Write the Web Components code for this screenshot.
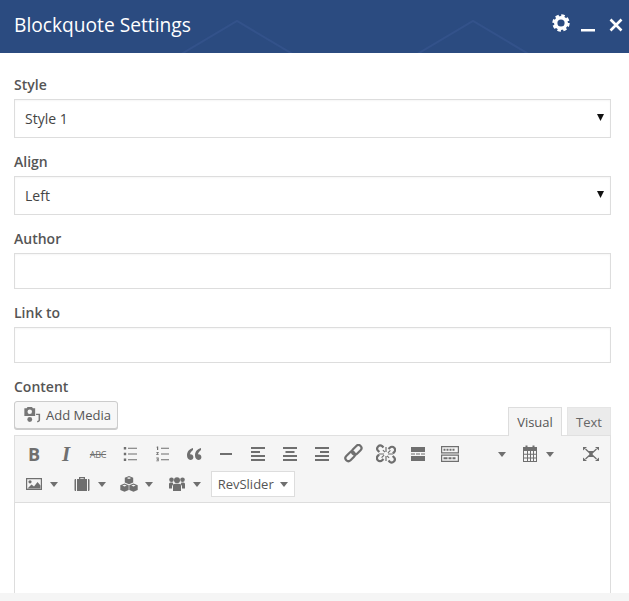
<!DOCTYPE html>
<html lang="en">
<head>
<meta charset="UTF-8">
<title>Blockquote Settings</title>
<style>
  html, body { margin: 0; height: 100%; background: #fff; overflow: hidden; }
  body { font-family: "Open Sans", sans-serif; }
</style>
</head>
<body>

<settings-dialog heading="Blockquote Settings">
  <form-field label="Style"><select-box value="Style 1"></select-box></form-field>
  <form-field label="Align"><select-box value="Left"></select-box></form-field>
  <form-field label="Author"><text-box></text-box></form-field>
  <form-field label="Link to"><text-box></text-box></form-field>
  <form-field label="Content" tight><content-editor></content-editor></form-field>
</settings-dialog>

<script>
  // Toolbar icon shapes, all on a 20x20 grid
  const ICONS = {
    ul: '<path d="M3.800 3h2.400v2.400H3.800zM3.800 8.800h2.400v2.400H3.800zM3.800 14.600h2.400V17H3.800zM8 3.700h9v1H8zM8 9.500h9v1H8zM8 15.300h9v1H8z"/>',
    ol: '<path d="M9 3.700h8v1H9zM9 9.500h8v1H9zM9 15.300h8v1H9z"/><path d="M5 2.500h1.200v3.600H5V3.400h-.7zM4.300 8h2.400v.8L5.400 10.300h1.300v.7H4.300v-.7l1.400-1.600H4.300zM4.300 13.500h2.400V17.200H4.300v-.7h1.500v-.7h-1v-.7h1v-.7H4.300z"/>',
    quote: '<path d="M9 4c-3.500 1-6 3.500-6 7.300 0 2.700 1.300 4.700 3.500 4.700 1.700 0 2.900-1.200 2.900-2.800 0-1.700-1.200-2.900-2.900-2.900-.2 0-.4 0-.6.100.3-1.500 1.600-3.200 3.100-4.300zM17 4c-3.500 1-6 3.500-6 7.300 0 2.700 1.300 4.700 3.500 4.700 1.700 0 2.900-1.200 2.900-2.800 0-1.700-1.200-2.900-2.900-2.900-.2 0-.4 0-.6.100.3-1.500 1.600-3.200 3.100-4.300z"/>',
    hr: '<path d="M4 9h12v2H4z"/>',
    left: '<path d="M3 3h14v2H3zM3 7h9v2H3zM3 11h14v2H3zM3 15h14v2H3z"/>',
    center: '<path d="M3 3h14v2H3zM5.500 7h9v2h-9zM3 11h14v2H3zM3 15h14v2H3z"/>',
    right: '<path d="M3 3h14v2H3zM8 7h9v2H8zM3 11h14v2H3zM3 15h14v2H3z"/>',
    link: '<g fill="none" stroke="currentColor" stroke-width="2.200"><rect x="-1" y="-3" width="11" height="6" rx="3" transform="translate(3 15.500) rotate(-45)"/><rect x="-1" y="-3" width="11" height="6" rx="3" transform="translate(9.500 9) rotate(-45)"/></g>',
    unlink: '<g fill="none" stroke="currentColor" stroke-width="2.200"><path d="M7.500 15l-1.300 1.300a3.100 3.100 0 0 1-4.400-4.400L3.100 10.600M12.500 5l1.300-1.300a3.100 3.100 0 0 1 4.400 4.400l-1.300 1.300"/><path d="M3.300 8L1.900 6.600a3.100 3.100 0 0 1 4.300-4.400L7.500 3.500M16.700 12l1.400 1.400a3.100 3.100 0 0 1-4.300 4.400L12.500 16.500"/></g><path d="M9.400 3h1.200v5H9.400zM9.400 12h1.200v5H9.400zM3 9.400h5v1.200H3zM12 9.400h5v1.200h-5z"/><path d="M11.500 8.500l2.500-2.500.8.800-2.500 2.500zM8.500 11.500L6 14l-.800-.800 2.500-2.500zM8.500 8.500L6.500 6.500l.8-.8 2 2zM11.500 11.500l2 2-.8.800-2-2z"/>',
    more: '<path d="M3 3h14v5H3zM3 12h14v5H3zM3 9.400h4v1.200H3zM8 9.400h4v1.200H8zM13 9.400h4v1.200h-4z"/>',
    kitchen: '<path d="M1 2h18v7.500H1zm1.200 1.200v5.100h15.600V3.200zM1 10.500h18V18H1zm1.200 1.200v5.100h15.600v-5.100z" fill-rule="evenodd"/><path d="M3.500 4.700h2v2h-2zm3 0h2v2h-2zm3 0h2v2h-2zm3 0h2v2h-2zm-9 8.500h4v2h-4zm5 0h3v2h-3zm4 0h3v2h-3z"/>',
    calendar: '<path d="M5.500 1.500h2V4h-2zM12.500 1.500h2V4h-2z"/><path d="M3 3h14v15H3zm1 4v10h12V7z" fill-rule="evenodd"/><path d="M4 9.800h12v1H4zM4 13.400h12v1H4zM7 7h1v10H7zM10 7h1v10h-1zM13 7h1v10h-1z"/>',
    full: '<path d="M2 3h4L2 6.600zM18 3v3.600L14 3zM2 17v-3.600L6 17zM18 17h-4l4-3.600z"/><path d="M4.500 5L8 8.200M15.500 5L12 8.200M4.500 15L8 11.800M15.500 15L12 11.800" stroke="currentColor" stroke-width="1.300"/><path d="M6.800 7h6.400L11.500 10l1.700 3H6.800l1.700-3z"/>',
    image: '<path d="M2 4h16v12H2zm1.200 1.200v9.600h13.600V5.200z" fill-rule="evenodd"/><circle cx="6" cy="7.800" r="1.600"/><path d="M3.500 14.500l4-4 2.500 2 3.500-4.500 3 3.500v3z"/>',
    briefcase: '<path d="M7 3h6v2h2v12H5V5h2zm1.300 1.200V5h3.400v-.8zM2.500 6a1 1 0 0 1 1-1H4v12h-.5a1 1 0 0 1-1-1zM16 5h.5a1 1 0 0 1 1 1v10a1 1 0 0 1-1 1H16z" fill-rule="evenodd"/>',
    cubes: '<path d="M10 2l4.200 1.800v4.700L10 10.300 5.800 8.500V3.800zM7.800 4.100L10 5l2.200-.9L10 3.200zM5.500 9.500l4.200 1.800V16l-4.200 1.800L1.300 16v-4.700zM3.300 11.600l2.200.9 2.200-.9-2.200-.9zM14.500 9.500l4.200 1.800V16l-4.200 1.800-4.200-1.800v-4.700zM12.300 11.600l2.200.9 2.200-.9-2.200-.9z" fill-rule="evenodd"/>',
    users: '<circle cx="10" cy="6.300" r="3"/><circle cx="4.500" cy="5.800" r="2.300"/><circle cx="15.500" cy="5.800" r="2.300"/><path d="M6 11.500a2 2 0 0 1 2-1.700h4a2 2 0 0 1 2 1.700v5.500H6zM2 10a1.500 1.500 0 0 1 1.500-1.500h2.200c.2 1 .6 1.500 1 1.800A2.800 2.800 0 0 0 5 12.500V14.500H2zM18 10a1.500 1.500 0 0 0-1.500-1.500h-2.200c-.2 1-.6 1.500-1 1.800a2.800 2.800 0 0 1 1.700 2.200v2H18z"/>',
    media: '<path d="M1.500 2.500H4l1-1.500h5l1 1.500h2.500V11h-12zM7.500 4a2.500 2.500 0 1 0 0 5 2.500 2.500 0 0 0 0-5z" fill-rule="evenodd"/><path d="M14.500 8.500H19V15.500a2.500 2.500 0 0 1-3.500 2.200l.5-1.400c.8.300 1.300-.1 1.300-.8V10h-2.800z"/><circle cx="7.500" cy="15" r="2.700"/>'
  };

  class ToolIcon extends HTMLElement {
    constructor() {
      super();
      this.attachShadow({ mode: "open" });
      const size = this.getAttribute("size") || 20;
      this.shadowRoot.innerHTML = `
        <style>
          :host { display: inline-flex; color: inherit; }
          svg { display: block; fill: currentColor; }
        </style>
        <svg width="${size}" height="${size}" viewBox="0 0 20 20">${ICONS[this.getAttribute("name")]}</svg>
      `;
    }
  }
  customElements.define("tool-icon", ToolIcon);

  // Icon or glyph button, optional dropdown caret after it
  class ToolButton extends HTMLElement {
    constructor() {
      super();
      this.attachShadow({ mode: "open" });
      this.shadowRoot.innerHTML = `
        <style>
          :host { display: flex; align-items: center; justify-content: center; height: 30px; width: 32px; color: #6f6f6f; }
          :host([caret]) { justify-content: flex-start; box-sizing: border-box; width: 47.67px; padding-left: 6px; gap: 6px; }
          .caret { width: 0; height: 0; border: 4px solid transparent; border-top: 5px solid #6f6f6f; border-bottom: 0; }
          .box { display: flex; align-items: center; justify-content: center; width: 20px; height: 20px; }
        </style>
        <span class="box"><slot></slot></span>
        ${this.hasAttribute("caret") ? '<span class="caret"></span>' : ""}
      `;
    }
  }
  customElements.define("tool-button", ToolButton);

  class SettingsDialog extends HTMLElement {
    constructor() {
      super();
      this.attachShadow({ mode: "open" });
      this.shadowRoot.innerHTML = `
        <style>
          :host { display: flex; flex-direction: column; height: 601px; background: #fff; }
          header { position: relative; flex: none; height: 53px; background: #2b4b80; color: #fff; display: flex; align-items: center; padding: 0 6px 0 14px; overflow: hidden; }
          .pattern { position: absolute; left: 0; top: 0; }
          h1 { position: relative; flex: 1; margin: 0 0 4px; font: 400 19.2px "Open Sans", sans-serif; }
          .actions { position: relative; display: flex; align-items: flex-start; height: 53px; }
          main { flex: 1; min-height: 0; padding: 21px 18px 0 14px; display: flex; flex-direction: column; }
          footer { flex: none; height: 8px; background: #f5f5f5; }
        </style>
        <header>
          <svg class="pattern" width="629" height="53" fill="none" stroke="#33528a" stroke-width="2">
            <path d="M178 56L237 21l59 35M414 56l59-35 59 35"/>
          </svg>
          <h1>${this.getAttribute("heading")}</h1>
          <div class="actions">
            <svg width="18" height="18" viewBox="0 0 18 18" style="margin-top:14px">
              <circle cx="9" cy="9" r="5.300" fill="none" stroke="#fff" stroke-width="3.400"/>
              <circle cx="9" cy="9" r="7.500" fill="none" stroke="#fff" stroke-width="2.400" stroke-dasharray="3.500 2.390"/>
            </svg>
            <svg width="14" height="3" style="margin:29px 0 0 11px"><rect width="14" height="2.500" fill="#fff"/></svg>
            <svg width="14" height="14" viewBox="0 0 14 14" style="margin:18px 0 0 14px"><path d="M1.500 1.500l11 11M12.500 1.500l-11 11" stroke="#fff" stroke-width="2.600"/></svg>
          </div>
        </header>
        <main><slot></slot></main>
        <footer></footer>
      `;
    }
  }
  customElements.define("settings-dialog", SettingsDialog);

  class FormField extends HTMLElement {
    constructor() {
      super();
      this.attachShadow({ mode: "open" });
      this.shadowRoot.innerHTML = `
        <style>
          :host { display: block; margin-bottom: 13px; }
          :host([tight]) { margin-bottom: 0; flex: 1; display: flex; flex-direction: column; min-height: 0; }
          label { display: block; height: 25px; font: 600 14px/22px "Open Sans", sans-serif; color: #555; }
        </style>
        <label>${this.getAttribute("label")}</label>
        <slot></slot>
      `;
    }
  }
  customElements.define("form-field", FormField);

  class SelectBox extends HTMLElement {
    constructor() {
      super();
      this.attachShadow({ mode: "open" });
      this.shadowRoot.innerHTML = `
        <style>
          :host { display: flex; align-items: center; justify-content: space-between; box-sizing: border-box; height: 39px; padding: 0 6px 0 10px; border: 1px solid #ddd; background: #fff; font: 400 14px "Open Sans", sans-serif; color: #444; box-shadow: inset 0 1px 2px rgba(0,0,0,.04); }
          svg { display: block; margin-bottom: 3px; }
        </style>
        <span>${this.getAttribute("value")}</span>
        <svg width="7" height="8"><path d="M0 1h7L3.500 8z" fill="#111"/></svg>
      `;
    }
  }
  customElements.define("select-box", SelectBox);

  class TextBox extends HTMLElement {
    constructor() {
      super();
      this.attachShadow({ mode: "open" });
      this.shadowRoot.innerHTML = `
        <style>
          :host { display: block; box-sizing: border-box; height: 36px; border: 1px solid #ddd; background: #fff; box-shadow: inset 0 1px 2px rgba(0,0,0,.04); }
        </style>
      `;
    }
  }
  customElements.define("text-box", TextBox);

  class ContentEditor extends HTMLElement {
    constructor() {
      super();
      this.attachShadow({ mode: "open" });
      this.shadowRoot.innerHTML = `
        <style>
          :host { display: flex; flex-direction: column; flex: 1; min-height: 0; }
          .top { display: flex; align-items: flex-end; justify-content: space-between; height: 34px; flex: none; }
          .media { display: flex; align-items: center; gap: 5px; box-sizing: border-box; height: 28px; width: 104px; margin-bottom: 6px; padding-left: 8px; border: 1px solid #ccc; border-radius: 3px; background: #f7f7f7; box-shadow: 0 1px 0 #ccc; font: 400 13px "Open Sans", sans-serif; color: #555; }
          .tabs { display: flex; gap: 5px; align-items: flex-end; }
          .tab { box-sizing: border-box; height: 28px; padding: 0 6px; display: flex; align-items: center; justify-content: center; border: 1px solid #e5e5e5; border-bottom: 0; background: #ebebeb; font: 400 13px "Open Sans", sans-serif; color: #666; }
          .tab.visual { width: 54px; height: 29px; margin-bottom: -1px; background: #f5f5f5; border-color: #ddd; color: #555; position: relative; }
          .tab.text { width: 44px; }
          .toolbar { flex: none; height: 68px; box-sizing: border-box; padding: 3px 4px 0 3px; background: #f5f5f5; border: 1px solid #e0e0e0; border-bottom-color: #ddd; }
          .row { display: flex; align-items: center; height: 30px; }
          .push { flex: 1; }
          .bold { font: 700 18px "Open Sans", sans-serif; }
          .ital { font: italic 700 21px "Liberation Serif", serif; }
          .abc { font: 400 9px "Open Sans", sans-serif; text-decoration: line-through; letter-spacing: -.3px; }
          .full { margin-right: -1px; }
          .rev { display: flex; align-items: center; gap: 6px; box-sizing: border-box; height: 26px; width: 84px; margin-left: 2px; padding-left: 6px; background: #fff; border: 1px solid #ddd; font: 400 13px "Open Sans", sans-serif; color: #555; }
          .rev i { width: 0; height: 0; border: 4px solid transparent; border-top: 5px solid #6f6f6f; border-bottom: 0; }
          .body { flex: 1; background: #fff; border: solid #ddd; border-width: 0 1px; }
        </style>
        <div class="top">
          <div class="media"><tool-icon name="media" size="18" style="color:#777"></tool-icon>Add Media</div>
          <div class="tabs"><div class="tab visual">Visual</div><div class="tab text">Text</div></div>
        </div>
        <div class="toolbar">
          <div class="row">
            <tool-button><span class="bold">B</span></tool-button>
            <tool-button><span class="ital">I</span></tool-button>
            <tool-button><span class="abc">ABC</span></tool-button>
            <tool-button><tool-icon name="ul"></tool-icon></tool-button>
            <tool-button><tool-icon name="ol"></tool-icon></tool-button>
            <tool-button><tool-icon name="quote"></tool-icon></tool-button>
            <tool-button><tool-icon name="hr"></tool-icon></tool-button>
            <tool-button><tool-icon name="left"></tool-icon></tool-button>
            <tool-button><tool-icon name="center"></tool-icon></tool-button>
            <tool-button><tool-icon name="right"></tool-icon></tool-button>
            <tool-button><tool-icon name="link"></tool-icon></tool-button>
            <tool-button><tool-icon name="unlink"></tool-icon></tool-button>
            <tool-button><tool-icon name="more"></tool-icon></tool-button>
            <tool-button><tool-icon name="kitchen"></tool-icon></tool-button>
            <tool-button caret><span></span></tool-button>
            <tool-button caret><tool-icon name="calendar"></tool-icon></tool-button>
            <span class="push"></span>
            <tool-button class="full"><tool-icon name="full"></tool-icon></tool-button>
          </div>
          <div class="row">
            <tool-button caret><tool-icon name="image"></tool-icon></tool-button>
            <tool-button caret><tool-icon name="briefcase"></tool-icon></tool-button>
            <tool-button caret><tool-icon name="cubes"></tool-icon></tool-button>
            <tool-button caret><tool-icon name="users"></tool-icon></tool-button>
            <div class="rev">RevSlider<i></i></div>
          </div>
        </div>
        <div class="body"></div>
      `;
    }
  }
  customElements.define("content-editor", ContentEditor);
</script>

</body>
</html>
